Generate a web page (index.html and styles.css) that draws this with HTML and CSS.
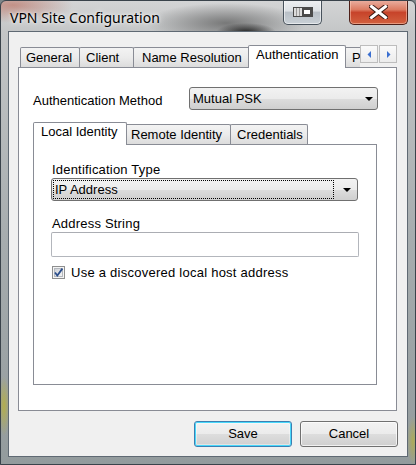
FILE: index.html
```html
<!DOCTYPE html>
<html>
<head>
<meta charset="utf-8">
<title>VPN Site Configuration</title>
<link rel="stylesheet" href="styles.css">
</head>
<body>
<div class="window">
  <div class="titlebar">
    <div class="title">VPN Site Configuration</div>
    <div class="capbtn tray">
      <svg width="22" height="12" viewBox="0 0 22 12">
        <rect x="1.5" y="1.5" width="19" height="9" fill="#dcdcdc" stroke="#4a4a4a"/>
        <line x1="4.5" y1="2" x2="4.5" y2="10" stroke="#9a9a9a"/>
        <line x1="7.5" y1="2" x2="7.5" y2="10" stroke="#9a9a9a"/>
        <rect x="10" y="2" width="10" height="8" fill="#4a4a4a"/>
        <rect x="12" y="4" width="6" height="4" fill="#ffffff"/>
      </svg>
    </div>
    <div class="capbtn close">
      <svg width="19" height="14" viewBox="0 0 19 14">
        <path d="M2.5 1.5 L16.5 12.5 M16.5 1.5 L2.5 12.5" stroke="#3b1b15" stroke-width="5" stroke-linecap="square"/>
        <path d="M2.5 1.5 L16.5 12.5 M16.5 1.5 L2.5 12.5" stroke="#ffffff" stroke-width="3" stroke-linecap="square"/>
      </svg>
    </div>
  </div>
  <div class="client">
    <div class="tabctl outer">
      <div class="tabstrip">
        <div class="tabs outer-tabs">
          <div class="tab t-general">General</div>
          <div class="tab t-client">Client</div>
          <div class="tab t-name">Name Resolution</div>
          <div class="tab sel t-auth">Authentication</div>
          <div class="tab t-p">P</div>
        </div>
        <div class="scroller">
          <div class="sbtn"><svg width="5" height="7" viewBox="0 0 5 7"><path d="M4 0 L0.5 3.5 L4 7 Z" fill="#3a6fd0"/></svg></div>
          <div class="sbtn"><svg width="5" height="7" viewBox="0 0 5 7"><path d="M1 0 L4.5 3.5 L1 7 Z" fill="#3a6fd0"/></svg></div>
        </div>
      </div>
      <div class="panel outer-panel">
        <div class="method-row">
          <span class="method-label">Authentication Method</span>
          <div class="combo method-combo">
            <span class="combo-text">Mutual PSK</span>
            <span class="arrow"></span>
          </div>
        </div>
        <div class="tabctl inner">
          <div class="tabstrip">
            <div class="tabs inner-tabs">
              <div class="tab sel t-local">Local Identity</div>
              <div class="tab t-remote">Remote Identity</div>
              <div class="tab t-cred">Credentials</div>
            </div>
          </div>
          <div class="panel inner-panel">
            <div class="field-label first">Identification Type</div>
            <div class="combo id-combo">
              <span class="focus-rect">IP Address</span>
              <span class="arrow"></span>
            </div>
            <div class="field-label">Address String</div>
            <div class="textbox"></div>
            <label class="check-row">
              <span class="checkbox">
                <svg width="13" height="13" viewBox="0 0 13 13">
                  <defs>
                    <linearGradient id="cbg" x1="0" y1="0" x2="1" y2="1">
                      <stop offset="0" stop-color="#cbcfd5"/>
                      <stop offset="1" stop-color="#f6f6f6"/>
                    </linearGradient>
                  </defs>
                  <rect x="0.5" y="0.5" width="12" height="12" fill="#f4f4f4" stroke="#8e8f8f"/>
                  <rect x="2.5" y="2.5" width="8" height="8" fill="url(#cbg)" stroke="#b4b8be"/>
                  <path d="M3 6.5 L5.3 9.6 L10.4 2.6" fill="none" stroke="#2c4f8c" stroke-width="1.8"/>
                </svg>
              </span>
              <span class="check-text">Use a discovered local host address</span>
            </label>
          </div>
        </div>
      </div>
    </div>
    <div class="buttons">
      <div class="btn default">Save</div>
      <div class="btn">Cancel</div>
    </div>
  </div>
</div>
</body>
</html>
```
FILE: styles.css
```css
* { box-sizing: border-box; }
html, body { margin: 0; padding: 0; }
body {
  width: 416px;
  height: 465px;
  overflow: hidden;
  background: #7d8588;
  font-family: "Liberation Sans", Arial, sans-serif;
  font-size: 13px;
  line-height: 15px;
  color: #000;
}

.window {
  width: 416px;
  height: 465px;
  display: flex;
  flex-direction: column;
  padding-bottom: 7px;
  border: 1px solid #3a434b;
  border-radius: 6px 6px 0 0;
  background-image:
    radial-gradient(ellipse 30px 9px at 245px 31px, rgba(30,30,30,0.95), rgba(30,30,30,0)),
    radial-gradient(ellipse 80px 20px at 225px 22px, rgba(85,85,85,0.7), rgba(85,85,85,0)),
    radial-gradient(ellipse 60px 18px at 12px 4px, rgba(180,80,60,0.5), rgba(180,80,60,0)),
    radial-gradient(ellipse 6px 30px at 3px 405px, rgba(190,180,40,0.7), rgba(190,180,40,0)),
    radial-gradient(ellipse 6px 25px at 412px 440px, rgba(190,180,40,0.6), rgba(190,180,40,0)),
    linear-gradient(to bottom, #d3d4d5 0, #c4c6c7 31px, #a7adaf 50%, #939b9d 100%);
  overflow: hidden;
}

.titlebar {
  height: 30px;
  display: flex;
  align-items: flex-start;
  flex: none;
}
.title {
  font-family: "Noto Sans", "Open Sans", sans-serif;
  font-size: 14px;
  line-height: 20px;
  padding-top: 7px;
  margin-left: 9px;
  color: #000;
  text-shadow: 0 0 6px rgba(255,255,255,0.9), 0 0 3px rgba(255,255,255,0.8);
  white-space: nowrap;
}
.capbtn {
  margin-top: -1px;
  height: 25px;
  display: flex;
  align-items: center;
  justify-content: center;
  border: 1px solid #48525c;
  border-top: none;
  border-radius: 0 0 5px 5px;
}
.tray {
  margin-left: auto;
  width: 39px;
  margin-right: 27px;
  background: linear-gradient(to bottom, #eef0f2 0, #dde1e5 45%, #b9c0c7 52%, #c9d0d6 100%);
  box-shadow: inset 0 0 0 1px rgba(255,255,255,0.55);
}
.close {
  width: 59px;
  margin-right: 7px;
  border-color: #4e1f18;
  background: linear-gradient(to bottom, #eab2a4 0, #dc7b62 40%, #c7432a 52%, #d2613f 100%);
  box-shadow: inset 0 0 0 1px rgba(255,210,190,0.5);
}

.client {
  flex: 1;
  margin: 0 7px;
  background: #f0f0f0;
  border: 1px solid #5f6973;
  padding: 13px 9px 0 9px;
  display: flex;
  flex-direction: column;
}

.tabctl { display: flex; flex-direction: column; }
.tabctl.outer { margin-right: 1px; }

.tabstrip {
  height: 23px;
  margin-bottom: -1px;
  display: flex;
  align-items: flex-start;
  flex: none;
}
.tabs {
  flex: 1;
  height: 23px;
  display: flex;
  align-items: flex-end;
  overflow: hidden;
}
.outer-tabs { padding-left: 2px; }

.tab {
  flex: none;
  height: 20px;
  margin-bottom: 1px;
  border: 1px solid #898c95;
  border-bottom: none;
  border-radius: 2px 2px 0 0;
  background: linear-gradient(to bottom, #f3f3f3 0, #ebebeb 50%, #dcdcdc 100%);
  padding-top: 2px;
  padding-left: 6px;
  white-space: nowrap;
  overflow: hidden;
}
.tab.sel {
  height: 23px;
  margin-bottom: 0;
  background: #fff;
  z-index: 2;
  padding-top: 1px;
}
.t-general { width: 60px; padding-left: 5px; }
.t-client { width: 55px; margin-left: -1px; padding-left: 6px; }
.t-name { width: 117px; margin-left: -1px; padding-left: 8px; }
.t-auth { width: 98px; margin-left: -2px; padding-left: 7px; }
.t-p { width: 60px; margin-left: -2px; padding-left: 7px; }

.t-local { width: 94px; padding-left: 7px; }
.t-remote { width: 106px; margin-left: -2px; padding-left: 5px; }
.t-cred { width: 78px; margin-left: -1px; padding-left: 6px; }

.scroller {
  display: flex;
  gap: 1px;
  flex: none;
}
.sbtn {
  width: 18px;
  height: 18px;
  border: 1px solid #bdbdbd;
  background: linear-gradient(to bottom, #fafafa, #ececec);
  display: flex;
  align-items: center;
  justify-content: center;
}

.panel {
  background: #fff;
  border: 1px solid #898c95;
}
.outer-panel {
  height: 344px;
  padding: 19px 18px 0 14px;
}

.method-row {
  display: flex;
  align-items: flex-start;
  justify-content: space-between;
}
.method-label { padding-top: 6px; }

.combo {
  height: 23px;
  display: flex;
  align-items: center;
  border: 1px solid #707070;
  border-radius: 3px;
  background: linear-gradient(to bottom, #f2f2f2 0, #ebebeb 50%, #dddddd 51%, #cfcfcf 100%);
}
.method-combo { width: 189px; }
.combo-text { flex: 1; padding-left: 3px; white-space: nowrap; }
.arrow {
  width: 0;
  height: 0;
  border-left: 4px solid transparent;
  border-right: 4px solid transparent;
  border-top: 4px solid #000;
  margin-right: 4px;
}

.tabctl.inner {
  margin-top: 12px;
  margin-right: 1px;
}
.inner-panel {
  height: 241px;
  padding: 17px 18px 0 17px;
}
.field-label { padding-left: 1px; margin-top: 15px; letter-spacing: 0.2px; }
.field-label.first { margin-top: 0; margin-bottom: 1px; }

.id-combo { width: 307px; }
.focus-rect {
  flex: 1;
  height: 19px;
  margin-left: 1px;
  margin-right: 9px;
  border: 1px dotted #000;
  padding-left: 1px;
  line-height: 17px;
  white-space: nowrap;
}
.id-combo .arrow { margin-right: 6px; }

.textbox {
  margin-top: 1px;
  width: 308px;
  height: 25px;
  border: 1px solid #b3b6bc;
  border-top-color: #abadb3;
  border-radius: 2px;
  background: #fff;
}

.check-row {
  display: flex;
  align-items: flex-start;
  margin-top: 8px;
  padding-left: 1px;
}
.checkbox { width: 13px; height: 13px; margin-top: 1px; display: block; }
.checkbox svg { display: block; }
.check-text { margin-left: 6px; white-space: nowrap; letter-spacing: 0.25px; }

.buttons {
  display: flex;
  justify-content: flex-end;
  gap: 8px;
  margin-top: 10px;
}
.btn {
  width: 98px;
  height: 26px;
  border: 1px solid #707070;
  border-radius: 3px;
  background: linear-gradient(to bottom, #f2f2f2 0, #ebebeb 50%, #dddddd 51%, #cfcfcf 100%);
  display: flex;
  align-items: center;
  justify-content: center;
  padding-bottom: 1px;
  box-shadow: inset 0 0 0 1px rgba(255,255,255,0.7);
}
.btn.default {
  border-color: #3c7fb1;
  box-shadow: inset 0 0 0 1px #48d8fb, inset 0 0 0 2px rgba(255,255,255,0.4);
}
```
